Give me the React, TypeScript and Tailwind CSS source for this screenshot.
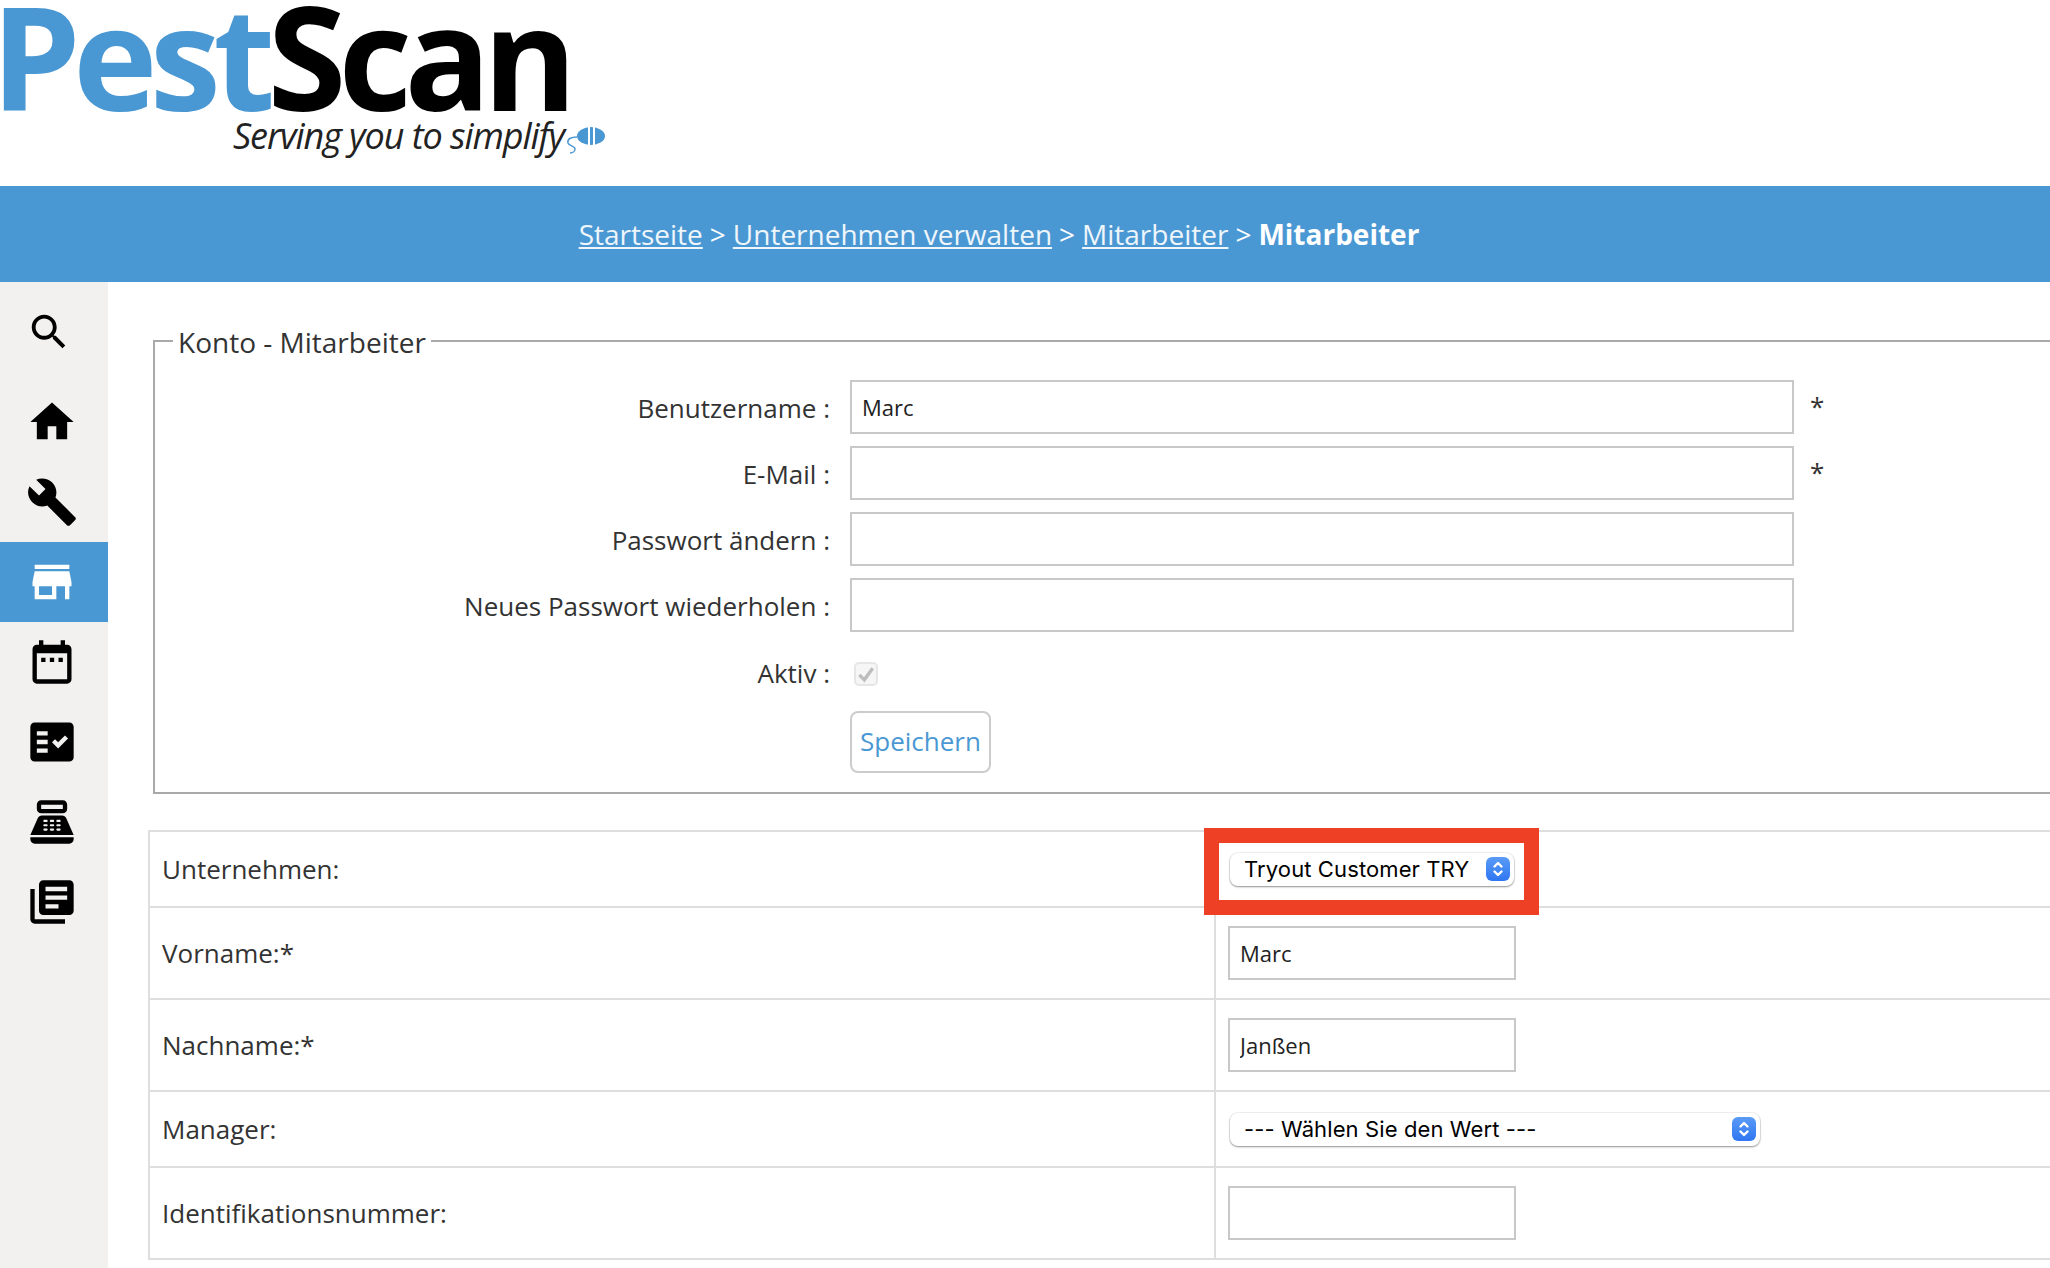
const navIcons = [
  { size: 'w-[46px] h-[46px]', rowClass: 'h-[100px]', active: false, d: 'M15.5 14h-.79l-.28-.27C15.41 12.59 16 11.11 16 9.5 16 5.91 13.09 3 9.5 3S3 5.91 3 9.5 5.91 16 9.5 16c1.61 0 3.09-.59 4.23-1.57l.27.28v.79l5 4.99L20.49 19l-4.99-5zm-6 0C7.01 14 5 11.99 5 9.5S7.01 5 9.5 5 14 7.01 14 9.5 11.99 14 9.5 14z' },
  { size: 'w-[52px] h-[52px]', rowClass: 'h-[80px]', active: false, d: 'M10 20v-6h4v6h5v-8h3L12 3 2 12h3v8z' },
  { size: 'w-[52px] h-[52px]', rowClass: 'h-[80px]', active: false, d: 'M22.7 19l-9.1-9.1c.9-2.3.4-5-1.5-6.9-2-2-5-2.4-7.4-1.3L9 6 6 9 1.6 4.7C.4 7.1.9 10.1 2.9 12.1c1.9 1.9 4.6 2.4 6.9 1.5l9.1 9.1c.4.4 1 .4 1.4 0l2.3-2.3c.5-.4.5-1.1.1-1.4z' },
  { size: 'w-[52px] h-[52px]', rowClass: 'h-[80px]', active: true, d: 'M20 4H4v2h16V4zm1 10v-2l-1-5H4l-1 5v2h1v6h10v-6h4v6h2v-6h1zm-9 4H6v-4h6v4z' },
  { size: 'w-[52px] h-[52px]', rowClass: 'h-[80px]', active: false, d: 'M19 4h-1V2h-2v2H8V2H6v2H5c-1.11 0-1.99.9-1.99 2L3 20c0 1.1.89 2 2 2h14c1.1 0 2-.9 2-2V6c0-1.1-.9-2-2-2zm0 16H5V8h14v12zM7 10h2v2H7zm4 0h2v2h-2zm4 0h2v2h-2z' },
  { size: 'w-[52px] h-[52px]', rowClass: 'h-[80px]', active: false, d: 'M20 3H4c-1.1 0-2 .9-2 2v14c0 1.1.9 2 2 2h16c1.1 0 2-.9 2-2V5c0-1.1-.9-2-2-2zM10 17H5v-2h5v2zm0-4H5v-2h5v2zm0-4H5V7h5v2zm4.82 6L12 12.16l1.41-1.41 1.41 1.42L17.99 9l1.42 1.42L14.82 15z' },
  { size: 'w-[52px] h-[52px]', rowClass: 'h-[80px]', active: false, d: 'M17 2H7c-1.1 0-2 .9-2 2v2c0 1.1.9 2 2 2h10c1.1 0 2-.9 2-2V4c0-1.1-.9-2-2-2zm0 4H7V4h10v2zm3 16H4c-1.1 0-2-.9-2-2v-1h20v1c0 1.1-.9 2-2 2zm-1.47-11.81C18.21 9.47 17.49 9 16.7 9H7.3c-.79 0-1.51.47-1.83 1.19L2 18h20l-3.47-7.81zM9.5 16h-1c-.28 0-.5-.22-.5-.5s.22-.5.5-.5h1c.28 0 .5.22.5.5s-.22.5-.5.5zm0-2h-1c-.28 0-.5-.22-.5-.5s.22-.5.5-.5h1c.28 0 .5.22.5.5s-.22.5-.5.5zm0-2h-1c-.28 0-.5-.22-.5-.5s.22-.5.5-.5h1c.28 0 .5.22.5.5s-.22.5-.5.5zm3 4h-1c-.28 0-.5-.22-.5-.5s.22-.5.5-.5h1c.28 0 .5.22.5.5s-.22.5-.5.5zm0-2h-1c-.28 0-.5-.22-.5-.5s.22-.5.5-.5h1c.28 0 .5.22.5.5s-.22.5-.5.5zm0-2h-1c-.28 0-.5-.22-.5-.5s.22-.5.5-.5h1c.28 0 .5.22.5.5s-.22.5-.5.5zm3 4h-1c-.28 0-.5-.22-.5-.5s.22-.5.5-.5h1c.28 0 .5.22.5.5s-.22.5-.5.5zm0-2h-1c-.28 0-.5-.22-.5-.5s.22-.5.5-.5h1c.28 0 .5.22.5.5s-.22.5-.5.5zm0-2h-1c-.28 0-.5-.22-.5-.5s.22-.5.5-.5h1c.28 0 .5.22.5.5s-.22.5-.5.5z' },
  { size: 'w-[52px] h-[52px]', rowClass: 'h-[80px]', active: false, d: 'M4 6H2v14c0 1.1.9 2 2 2h14v-2H4V6zm16-4H8c-1.1 0-2 .9-2 2v12c0 1.1.9 2 2 2h12c1.1 0 2-.9 2-2V4c0-1.1-.9-2-2-2zm-1 9H9V9h10v2zm-4 4H9v-2h6v2zm4-8H9V5h10v2z' },
];

const Select = ({ label, width }: { label: string; width: string }) => (
  <div className={`${width} h-[33px] ml-[2px] flex items-center justify-between rounded-[8px] bg-white pl-[14px] pr-[4px] shadow-[0_1px_2px_rgba(0,0,0,0.4),0_0_0_1px_rgba(0,0,0,0.05)]`}>
    <span className="font-['Inter',sans-serif] text-[22px] tracking-[0.005em] text-black">{label}</span>
    <span className="w-[24px] h-[24px] rounded-[6px] bg-linear-to-b from-[#5a9bf6] to-[#2f76f2] flex items-center justify-center">
      <svg viewBox="0 0 24 24" className="w-[24px] h-[24px]" fill="none" stroke="white" strokeWidth="2.4" strokeLinecap="round" strokeLinejoin="round">
        <path d="M8.5 9.5 12 6l3.5 3.5M8.5 14.5 12 18l3.5-3.5" />
      </svg>
    </span>
  </div>
);

const TextInput = ({ value, className }: { value?: string; className: string }) => (
  <input readOnly value={value ?? ''} className={`${className} h-[54px] border-2 border-[#c8c8c8] bg-white px-[10px] text-[22px] text-[#222] outline-none`} />
);

const FormRow = ({ label, value, required }: { label: string; value?: string; required?: boolean }) => (
  <div className="flex items-center h-[54px] mb-[12px]">
    <label className="w-[675px] mt-[3px] text-right text-[26px] text-[#333]">{label} :</label>
    <TextInput value={value} className="ml-[20px] w-[944px]" />
    {required && <span className="ml-[16px] text-[26px] text-[#333]">*</span>}
  </div>
);

const TableRow = ({ label, tall, children }: { label: string; tall?: boolean; children: React.ReactNode }) => (
  <div className={`flex ${tall ? 'h-[92px]' : 'h-[76px]'} border-b-2 border-[#dedede]`}>
    <div className="w-[1064px] flex items-center pl-[12px] text-[26px] text-[#333]">{label}</div>
    <div className="flex-1 flex items-center border-l-2 border-[#dedede] pl-[12px]">{children}</div>
  </div>
);

export default function App() {
  return (
    <div className="w-[2050px] h-[1268px] overflow-hidden bg-white font-['Open_Sans',sans-serif]">
      <header className="h-[186px] relative">
        <div className="-ml-[9px] h-[116px] text-[143px] leading-[111px] font-bold tracking-[-0.054em] whitespace-nowrap">
          <span className="text-[#4a98d3]">Pest</span>
          <span className="text-black">Scan</span>
        </div>
        <div className="flex items-start pl-[233px]">
          <span className="text-[36px] leading-[40px] italic font-medium text-[#222] tracking-[-0.03em] whitespace-nowrap">Serving you to simplify</span>
          <svg viewBox="0 0 42 30" className="w-[42px] h-[30px] mt-[9px]">
            <ellipse cx="27" cy="11" rx="14" ry="9" fill="#4a98d3" />
            <rect x="24" y="2" width="2" height="18" fill="white" />
            <rect x="29" y="2" width="2" height="18" fill="white" />
            <path d="M13 12C7 12 3 14 4 18c1 3 7 3 7 6 0 2-2 4-5 4" fill="none" stroke="#4a98d3" strokeWidth="1.5" />
          </svg>
        </div>
      </header>

      <nav className="h-[96px] bg-[#4a98d3] flex items-center justify-center pr-[52px] text-[28px] text-white">
        <a className="underline text-[#eef5fb]">Startseite</a>
        <span className="mx-[7px]">&gt;</span>
        <a className="underline text-[#eef5fb]">Unternehmen verwalten</a>
        <span className="mx-[7px]">&gt;</span>
        <a className="underline text-[#eef5fb]">Mitarbeiter</a>
        <span className="mx-[7px]">&gt;</span>
        <span className="font-bold">Mitarbeiter</span>
      </nav>

      <div className="flex h-[986px]">
        <aside className="w-[108px] shrink-0 bg-[#f2f1f0]">
          {navIcons.map((icon, i) => (
            <div key={i} className={`${icon.rowClass} flex items-center pl-[26px] ${icon.active ? 'bg-[#4a98d3]' : ''}`}>
              <svg viewBox="0 0 24 24" className={icon.size} fill={icon.active ? 'white' : 'black'}>
                <path d={icon.d} />
              </svg>
            </div>
          ))}
        </aside>

        <main className="flex-1 overflow-hidden">
          <fieldset className="ml-[45px] mt-[38px] w-[2100px] h-[474px] border-2 border-[#a9a9a9]">
            <legend className="ml-[18px] px-[5px] pt-[4px] text-[28px] leading-[37.5px] text-[#333]">Konto - Mitarbeiter</legend>
            <div className="pt-[18px]">
              <FormRow label="Benutzername" value="Marc" required />
              <FormRow label="E-Mail" required />
              <FormRow label="Passwort ändern" />
              <FormRow label="Neues Passwort wiederholen" />
              <div className="flex items-center h-[36px] mt-[24px]">
                <label className="w-[675px] text-right text-[26px] text-[#333]">Aktiv :</label>
                <span className="ml-[24px] w-[24px] h-[24px] rounded-[5px] border-2 border-[#e6e6e6] bg-[#f6f6f6] flex items-center justify-center">
                  <svg viewBox="0 0 24 24" className="w-[22px] h-[22px]" fill="none" stroke="#bdbdbd" strokeWidth="4">
                    <path d="M4 13l6 6L20 5" />
                  </svg>
                </span>
              </div>
              <button className="block ml-[695px] mt-[19px] w-[141px] h-[62px] rounded-[8px] border-2 border-[#cccccc] bg-white text-[26px] text-[#4a98d3]">
                Speichern
              </button>
            </div>
          </fieldset>

          <div className="relative ml-[40px] mt-[36px] w-[2100px] border-t-2 border-l-2 border-[#dedede]">
            <TableRow label="Unternehmen:">
              <Select label="Tryout Customer TRY" width="w-[284px]" />
            </TableRow>
            <TableRow label="Vorname:*" tall>
              <TextInput value="Marc" className="w-[288px]" />
            </TableRow>
            <TableRow label="Nachname:*" tall>
              <TextInput value="Janßen" className="w-[288px]" />
            </TableRow>
            <TableRow label="Manager:">
              <Select label="--- Wählen Sie den Wert ---" width="w-[530px]" />
            </TableRow>
            <TableRow label="Identifikationsnummer:" tall>
              <TextInput className="w-[288px]" />
            </TableRow>
            <div className="absolute left-[1054px] -top-[4px] w-[335px] h-[87px] border-[15px] border-[#ee4025]" />
          </div>
        </main>
      </div>
    </div>
  );
}
